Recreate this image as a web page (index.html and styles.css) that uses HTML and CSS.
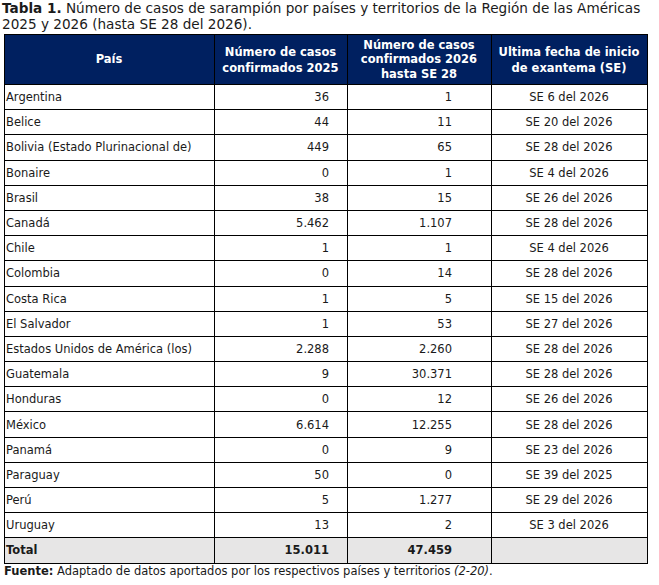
FILE: index.html
```html
<!DOCTYPE html>
<html lang="es">
<head>
    <meta charset="UTF-8">
    <meta name="viewport" content="width=device-width, initial-scale=1.0">
    <title>Tabla 1. Casos de sarampión</title>
    <link rel="stylesheet" href="styles.css">
</head>
<body>
    <div class="page">
        <p class="caption">
            <b>Tabla 1.</b> Número de casos de sarampión por países y territorios de la Región de las Américas<br>
            2025 y 2026 (hasta SE 28 del 2026).
        </p>

        <table class="cases">
            <colgroup>
                <col class="c-pais">
                <col class="c-2025">
                <col class="c-2026">
                <col class="c-fecha">
            </colgroup>
            <thead>
                <tr>
                    <th>País</th>
                    <th class="two">Número de casos<br>confirmados 2025</th>
                    <th>Número de casos<br>confirmados 2026<br>hasta SE 28</th>
                    <th class="two">Ultima fecha de inicio<br>de exantema (SE)</th>
                </tr>
            </thead>
            <tbody>
                <tr><td>Argentina</td><td class="n25">36</td><td class="n26">1</td><td class="se">SE 6 del 2026</td></tr>
                <tr><td>Belice</td><td class="n25">44</td><td class="n26">11</td><td class="se">SE 20 del 2026</td></tr>
                <tr><td>Bolivia (Estado Plurinacional de)</td><td class="n25">449</td><td class="n26">65</td><td class="se">SE 28 del 2026</td></tr>
                <tr><td>Bonaire</td><td class="n25">0</td><td class="n26">1</td><td class="se">SE 4 del 2026</td></tr>
                <tr><td>Brasil</td><td class="n25">38</td><td class="n26">15</td><td class="se">SE 26 del 2026</td></tr>
                <tr><td>Canadá</td><td class="n25">5.462</td><td class="n26">1.107</td><td class="se">SE 28 del 2026</td></tr>
                <tr><td>Chile</td><td class="n25">1</td><td class="n26">1</td><td class="se">SE 4 del 2026</td></tr>
                <tr><td>Colombia</td><td class="n25">0</td><td class="n26">14</td><td class="se">SE 28 del 2026</td></tr>
                <tr><td>Costa Rica</td><td class="n25">1</td><td class="n26">5</td><td class="se">SE 15 del 2026</td></tr>
                <tr><td>El Salvador</td><td class="n25">1</td><td class="n26">53</td><td class="se">SE 27 del 2026</td></tr>
                <tr><td>Estados Unidos de América (los)</td><td class="n25">2.288</td><td class="n26">2.260</td><td class="se">SE 28 del 2026</td></tr>
                <tr><td>Guatemala</td><td class="n25">9</td><td class="n26">30.371</td><td class="se">SE 28 del 2026</td></tr>
                <tr><td>Honduras</td><td class="n25">0</td><td class="n26">12</td><td class="se">SE 26 del 2026</td></tr>
                <tr><td>México</td><td class="n25">6.614</td><td class="n26">12.255</td><td class="se">SE 28 del 2026</td></tr>
                <tr><td>Panamá</td><td class="n25">0</td><td class="n26">9</td><td class="se">SE 23 del 2026</td></tr>
                <tr><td>Paraguay</td><td class="n25">50</td><td class="n26">0</td><td class="se">SE 39 del 2025</td></tr>
                <tr><td>Perú</td><td class="n25">5</td><td class="n26">1.277</td><td class="se">SE 29 del 2026</td></tr>
                <tr><td>Uruguay</td><td class="n25">13</td><td class="n26">2</td><td class="se">SE 3 del 2026</td></tr>
            </tbody>
            <tfoot>
                <tr>
                    <td>Total</td>
                    <td class="n25">15.011</td>
                    <td class="n26">47.459</td>
                    <td></td>
                </tr>
            </tfoot>
        </table>

        <p class="source">
            <b>Fuente:</b> Adaptado de datos aportados por los respectivos países y territorios <i>(2-20)</i>.
        </p>
    </div>
</body>
</html>
```

FILE: styles.css
```css
* {
    box-sizing: border-box;
    margin: 0;
    padding: 0;
}
body {
    background-color: #fff;
    font-family: "DejaVu Sans", sans-serif;
    color: #1a1a1a;
}
.page {
    width: 659px;
    padding: 0 4px 0 4px;
}
.caption {
    font-size: 13.6px;
    line-height: 16px;
    margin-left: -2px;
    margin-bottom: 2px;
}
.cases {
    width: 643px;
    border-collapse: collapse;
    table-layout: fixed;
    font-size: 11.5px;
}
.c-pais { width: 210px; }
.c-2025 { width: 133px; }
.c-2026 { width: 144px; }
.c-fecha { width: 156px; }
th, td {
    border: 1px solid #000;
    height: 25.2px;
    padding: 0 2px 0 1px;
    white-space: nowrap;
}
th {
    background-color: #002060;
    color: #fff;
    font-size: 11.5px;
    line-height: 14.5px;
    height: 50px;
    text-align: center;
}
th.two {
    line-height: 16px;
}
.n25 {
    text-align: right;
    padding-right: 18px;
}
.n26 {
    text-align: right;
    padding-right: 39px;
}
.se {
    text-align: center;
}
tfoot td {
    background-color: #e7e6e6;
    font-weight: bold;
}
.source {
    font-size: 11.5px;
    line-height: 14px;
    margin-top: 0;
}
```
